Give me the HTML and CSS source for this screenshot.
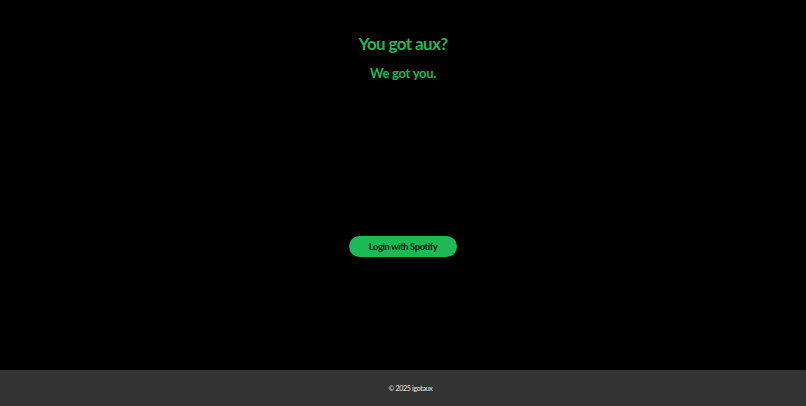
FILE: index.html
```html
<!DOCTYPE html>
<html>
<head>
<meta charset="utf-8">
<link rel="stylesheet" href="styles.css">
</head>
<body>
<main class="main">
  <h1 class="title">You got aux?</h1>
  <h2 class="subtitle">We got you.</h2>
  <button class="login">Login with Spotify</button>
</main>
<footer class="footer"><span class="copy">© 2025 igotaux</span></footer>
</body>
</html>
```
FILE: styles.css
```css
html, body {
  margin: 0;
  padding: 0;
  background: #000;
  font-family: Lato, "Open Sans", sans-serif;
}
.main {
  height: 370px;
  display: flex;
  flex-direction: column;
  align-items: center;
  box-sizing: border-box;
  padding-top: 32px;
}
.title {
  margin: 0;
  color: #1db954;
  font-size: 17px;
  letter-spacing: -0.6px;
  font-weight: 700;
  line-height: 24px;
}
.subtitle {
  margin: 8px 0 0 0;
  color: #1db954;
  font-size: 13px;
  letter-spacing: -0.3px;
  font-weight: 700;
  line-height: 18px;
}
.login {
  margin-top: 154px;
  width: 108px;
  height: 21px;
  border: none;
  border-radius: 11px;
  background: #1db954;
  color: #111;
  font-family: Lato, "Open Sans", sans-serif;
  font-weight: 700;
  font-size: 9.5px;
  letter-spacing: -0.45px;
  padding: 0;
}
.footer {
  height: 36px;
  background: #333;
  color: #e8e8e8;
  font-size: 7px;
  letter-spacing: -0.3px;
  display: flex;
  align-items: center;
  justify-content: center;
  padding-left: 15px;
}
```
